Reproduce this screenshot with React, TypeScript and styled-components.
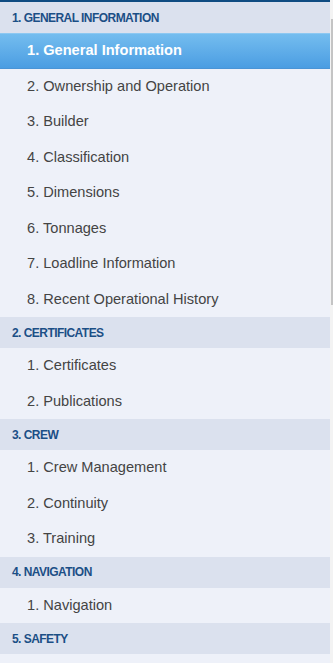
import styled, { createGlobalStyle } from 'styled-components';

const sections = [
  {
    title: '1. General Information',
    items: [
      'General Information',
      'Ownership and Operation',
      'Builder',
      'Classification',
      'Dimensions',
      'Tonnages',
      'Loadline Information',
      'Recent Operational History',
    ],
  },
  { title: '2. Certificates', items: ['Certificates', 'Publications'] },
  { title: '3. Crew', items: ['Crew Management', 'Continuity', 'Training'] },
  { title: '4. Navigation', items: ['Navigation'] },
  { title: '5. Safety', items: [] as string[] },
];

const GlobalStyle = createGlobalStyle`
  html, body {
    margin: 0;
    padding: 0;
    height: 100%;
    overflow: hidden;
    background: #fff;
  }
  * { box-sizing: border-box; }
`;

export default function App() {
  const active = '1-0';

  return (
    <>
      <GlobalStyle />
      <Frame>
        <Sidebar>
          <TopBar />
          {sections.map((s, si) => (
            <Section key={s.title}>
              <SectionTitle>{s.title}</SectionTitle>
              {s.items.map((it, ii) => (
                <Item key={it} $active={`${si + 1}-${ii}` === active}>
                  {ii + 1}. {it}
                </Item>
              ))}
            </Section>
          ))}
        </Sidebar>
        <Track>
          <Thumb />
        </Track>
      </Frame>
    </>
  );
}

const Frame = styled.div`
  display: flex;
  width: 333px;
  height: 663px;
  overflow: hidden;
  font-family: 'Liberation Sans', Arial, sans-serif;
`;

const Sidebar = styled.nav`
  flex: 0 0 330px;
  display: flex;
  flex-direction: column;
  background: #eef1f9;
`;

const TopBar = styled.div`
  height: 2px;
  flex: none;
  background: #0f4c82;
`;

const Section = styled.div`
  display: flex;
  flex-direction: column;
`;

const SectionTitle = styled.div`
  height: 31px;
  flex: none;
  display: flex;
  align-items: center;
  padding-left: 12px;
  background: #dbe1ee;
  color: #1b4f86;
  font-size: 12px;
  font-weight: bold;
  text-transform: uppercase;
  letter-spacing: -0.55px;
`;

const Item = styled.div<{ $active?: boolean }>`
  height: 35.5px;
  flex: none;
  display: flex;
  align-items: center;
  padding-left: 27px;
  padding-bottom: 1px;
  font-size: 14.6px;
  color: ${(p) => (p.$active ? '#fff' : '#444')};
  font-weight: ${(p) => (p.$active ? 'bold' : 'normal')};
  background: ${(p) =>
    p.$active ? 'linear-gradient(to bottom, #74bdef, #4b9de2)' : '#eef1f9'};
  border-top: 1px solid ${(p) => (p.$active ? '#8cc8f2' : 'transparent')};
  border-bottom: 1px solid ${(p) => (p.$active ? '#4a94d6' : 'transparent')};
`;

const Track = styled.div`
  flex: 0 0 3px;
  display: flex;
  flex-direction: column;
  align-items: flex-end;
  background: #f3f3f3;
`;

const Thumb = styled.div`
  width: 2px;
  height: 286px;
  margin-top: 19px;
  background: #c4c4c4;
`;
